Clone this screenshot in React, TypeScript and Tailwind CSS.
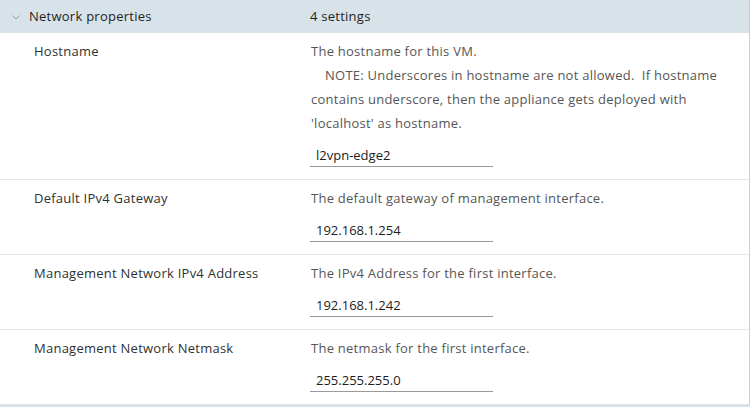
import React from "react";

const rows: { label: string; desc: string[]; value: string; indent?: number[] }[] = [
  {
    label: "Hostname",
    desc: [
      "The hostname for this VM.",
      "NOTE: Underscores in hostname are not allowed.\u00a0 If hostname",
      "contains underscore, then the appliance gets deployed with",
      "'localhost' as hostname.",
    ],
    indent: [1],
    value: "l2vpn-edge2",
  },
  {
    label: "Default IPv4 Gateway",
    desc: ["The default gateway of management interface."],
    value: "192.168.1.254",
  },
  {
    label: "Management Network IPv4 Address",
    desc: ["The IPv4 Address for the first interface."],
    value: "192.168.1.242",
  },
  {
    label: "Management Network Netmask",
    desc: ["The netmask for the first interface."],
    value: "255.255.255.0",
  },
];

export default function App() {
  return (
    <div
      className="w-[755px] h-[407px] bg-white overflow-hidden text-[13px] tracking-[0.25px]"
      style={{ fontFamily: "'Open Sans', Lato, sans-serif" }}
    >
      <div className="w-[750px] border-r border-[#cccccc] flex flex-col">
        <div className="h-[33px] bg-[#d8e3e9] flex items-center text-[#1f1f1f]">
          <div className="w-[29px] flex justify-center pl-[3px]">
            <svg width="8" height="5" viewBox="0 0 8 5" className="mt-[1px]">
              <path d="M0.5 0.5 L4 4 L7.5 0.5" fill="none" stroke="#9aa3a8" strokeWidth="1" />
            </svg>
          </div>
          <div className="w-[281px]">Network properties</div>
          <div>4 settings</div>
        </div>
        {rows.map((r, i) => (
          <div
            key={r.label}
            className={`flex pt-[6px] pb-[12px] ${i < rows.length - 1 ? "border-b border-[#e8e8e8]" : ""}`}
          >
            <div className="w-[311px] pl-[34px] leading-[24px] text-[#313131]">{r.label}</div>
            <div className="flex-1">
              <div className="leading-[24px] text-[#565656] whitespace-nowrap">
                {r.desc.map((d, j) => (
                  <div key={j} className={r.indent && r.indent.includes(j) ? "pl-[14px]" : ""}>
                    {d}
                  </div>
                ))}
              </div>
              <div className="mt-[8px] w-[183px] h-[24px] border-b border-[#9a9a9a] pl-[6px] leading-[24px] text-[#1d1d1d] -ml-px tracking-normal">
                {r.value}
              </div>
            </div>
          </div>
        ))}
      </div>
      <div className="h-[3px] w-[750px] bg-[#d8e3e9]" />
    </div>
  );
}
